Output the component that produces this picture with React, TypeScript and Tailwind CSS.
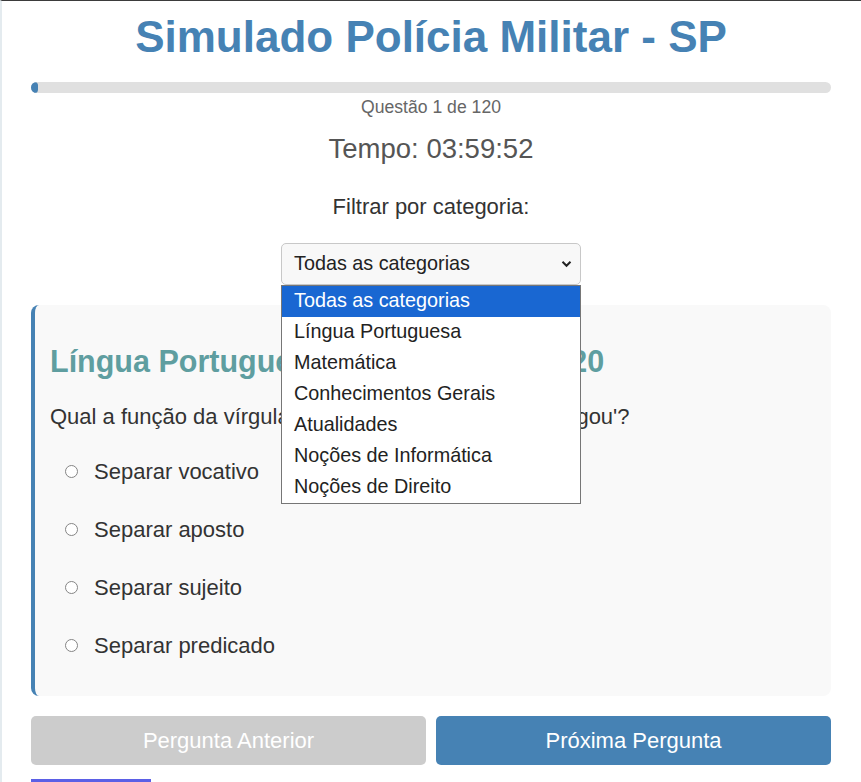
import { useState } from "react";

const categorias = [
  "Todas as categorias",
  "Língua Portuguesa",
  "Matemática",
  "Conhecimentos Gerais",
  "Atualidades",
  "Noções de Informática",
  "Noções de Direito",
];

const opcoes = [
  "Separar vocativo",
  "Separar aposto",
  "Separar sujeito",
  "Separar predicado",
];

function Chevron() {
  return (
    <svg width="11" height="8" viewBox="0 0 11 8" className="shrink-0">
      <path d="M1.5 1.8 L5.5 5.8 L9.5 1.8" fill="none" stroke="#222" strokeWidth="2" />
    </svg>
  );
}

export default function App() {
  const [selected, setSelected] = useState<string | null>(null);
  const atual = 1;
  const total = 120;

  return (
    <div className="min-h-[782px] bg-white border-t border-[#3b3b3b] border-l-2 border-l-[#e4ebef] font-['Liberation_Sans',Arial,sans-serif]">
      <div className="ml-[29px] w-[800px]">
        {/* Header */}
        <h1 className="mt-[11px] text-center text-[44px] font-bold leading-[1.15] text-[#4682b4]">
          Simulado Polícia Militar - SP
        </h1>

        <div className="mt-[19px] h-[11px] w-full overflow-hidden rounded-full bg-[#e0e0e0]">
          <div
            className="h-full rounded-full bg-[#4682b4]"
            style={{ width: `${(atual / total) * 100}%` }}
          />
        </div>
        <p className="mt-[4px] text-center text-[17.6px] leading-[1.15] text-[#666]">
          Questão {atual} de {total}
        </p>

        <p className="mt-[16px] text-center text-[27.5px] leading-[1.15] text-[#555]">
          Tempo: 03:59:52
        </p>

        {/* Filtro */}
        <p className="mt-[30px] text-center text-[22px] leading-[1.15] text-[#333]">
          Filtrar por categoria:
        </p>
        <div className="mt-[23px] flex justify-center">
          <div className="relative w-[300px]">
            <div className="flex h-[42px] items-center justify-between rounded-[5px] border border-[#c8c8c8] bg-[#f8f8f8] pl-[12px] pr-[8px] text-[19.8px] text-[#222]">
              <span>Todas as categorias</span>
              <Chevron />
            </div>
            <ul className="absolute left-0 top-[42px] z-10 w-[300px] border border-[#767676] bg-white text-[19.8px] text-[#222]">
              {categorias.map((c, i) => (
                <li
                  key={c}
                  className={
                    i === 0
                      ? "flex h-[31px] items-center bg-[#1967d2] pl-[12px] text-white"
                      : "flex h-[31px] items-center pl-[12px]"
                  }
                >
                  {c}
                </li>
              ))}
            </ul>
          </div>
        </div>

        {/* Questão */}
        <div className="mt-[20px] rounded-[8px] border-l-[4px] border-[#4682b4] bg-[#f9f9f9] pb-[22px] pl-[15px] pr-[16px] pt-[16px]">
          <h2 className="mt-[23px] text-[30.5px] font-bold leading-[1.15] text-[#5f9ea0]">
            Língua Portuguesa - Questão 1 de 120
          </h2>
          <p className="mt-[25px] text-[22px] leading-[1.15] text-[#333]">
            Qual a função da vírgula em 'João, o professor, já chegou'?
          </p>
          <div className="mt-[13px]">
            {opcoes.map((o) => (
              <label
                key={o}
                className="flex h-[58px] cursor-pointer items-center pl-[15px] text-[22px] text-[#333]"
                onClick={() => setSelected(o)}
              >
                <span className="mr-[16px] flex h-[13px] w-[13px] items-center justify-center rounded-full border border-[#858585] bg-white">
                  {selected === o && <span className="h-[7px] w-[7px] rounded-full bg-[#1967d2]" />}
                </span>
                {o}
              </label>
            ))}
          </div>
        </div>

        {/* Navegação */}
        <div className="mt-[20px] flex gap-[10px]">
          <button className="h-[49px] flex-1 rounded-[5px] bg-[#cccccc] text-[22px] text-white">
            Pergunta Anterior
          </button>
          <button className="h-[49px] flex-1 rounded-[5px] bg-[#4682b4] text-[22px] text-white">
            Próxima Pergunta
          </button>
        </div>
        <div className="mt-[14px] h-[4px] w-[120px] bg-[#5b5fe6]" />
      </div>
    </div>
  );
}
